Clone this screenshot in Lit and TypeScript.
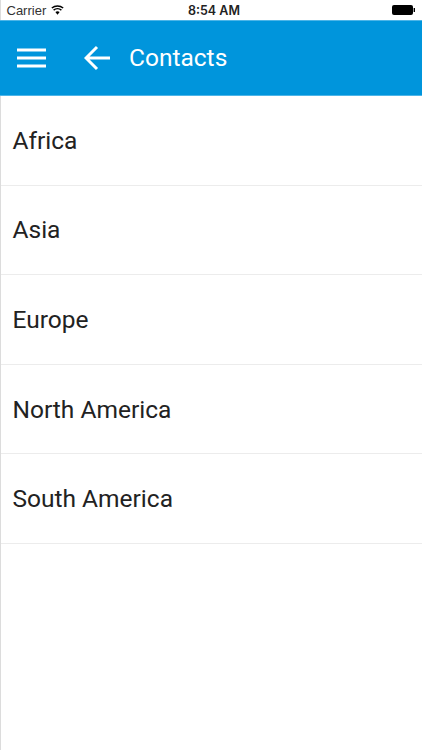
import { LitElement, html, css } from "lit";
import { customElement } from "lit/decorators.js";

@customElement("app-root")
export class AppRoot extends LitElement {
  static styles = css`
    :host { display: block; width: 422px; height: 750px; overflow: hidden; background: #fff; font-family: Roboto, sans-serif; }
    .page { display: flex; flex-direction: column; height: 750px; border-left: 1px solid #dcdcdc; box-sizing: border-box; }
    .status { flex: none; height: 20px; margin-left: -1px; padding: 0 7px 0 6.5px; display: grid; grid-template-columns: 181.5px auto 1fr; align-items: center; font: 13px "Liberation Sans", sans-serif; color: #111; }
    .carrier { display: flex; align-items: center; gap: 5px; color: #333; }
    .time { font: 600 12.5px Inter, "Liberation Sans", sans-serif; color: #222; }
    .battery { justify-self: end; display: flex; }
    .bar { flex: none; height: 76px; box-sizing: border-box; margin-left: -1px; background: #0095dc; border-top: 1px solid #4db5e8; border-bottom: 1px solid #4db5e8; color: #fff; display: flex; align-items: center; padding: 0 0 1px 17px; font-size: 24.5px; }
    .bar svg { display: block; }
    .back { margin-left: 38px; margin-right: 19px; }
    .row { flex: none; height: 89.6px; box-sizing: border-box; border-bottom: 1px solid #ececec; padding: 0 0 0 11.5px; display: flex; align-items: center; font-size: 24.5px; color: #222; }
  `;
  render() {
    const items = ["Africa", "Asia", "Europe", "North America", "South America"];
    return html`<div class="page">
      <div class="status">
        <div class="carrier">Carrier
          <svg width="13" height="10" viewBox="0 0 14 10"><path d="M7 10 4.7 7.2a3.6 3.6 0 0 1 4.6 0Z" fill="#000"/><path d="M2.8 5.1a6.4 6.4 0 0 1 8.4 0M.9 2.9a9.4 9.4 0 0 1 12.2 0" fill="none" stroke="#000" stroke-width="1.6"/></svg>
        </div>
        <div class="time">8:54 AM</div>
        <div class="battery"><svg width="23" height="10" viewBox="0 0 23 10"><rect x="0" y="0" width="21" height="10" rx="2" fill="#000"/><rect x="21.6" y="3" width="1.4" height="4" fill="#000"/></svg></div>
      </div>
      <div class="bar">
        <svg width="29" height="20" viewBox="0 0 29 20"><path d="M0 2h29M0 10h29M0 18h29" stroke="#fff" stroke-width="3"/></svg>
        <svg class="back" width="26" height="26" viewBox="0 0 26 26"><path d="M13 2 2 13l11 11M2 13h24" fill="none" stroke="#fff" stroke-width="3"/></svg>
        <span>Contacts</span>
      </div>
      ${items.map((i) => html`<div class="row">${i}</div>`)}
    </div>`;
  }
}
